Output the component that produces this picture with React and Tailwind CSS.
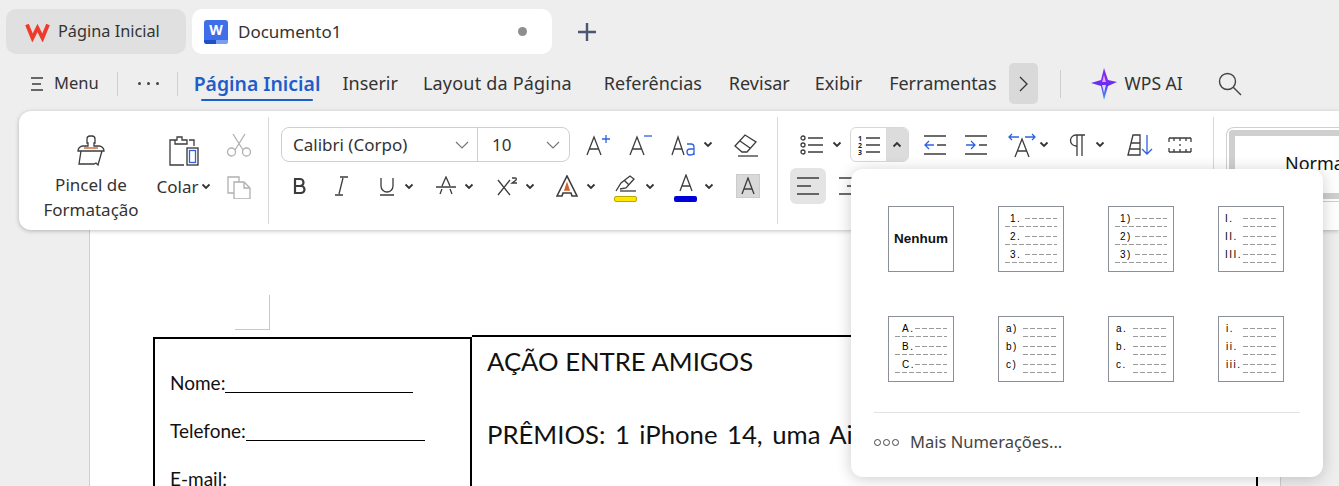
import React from 'react'

const ink = '#3c3c3c'

const Chevron = ({ className = '' }) => (
    <svg width="10" height="7" viewBox="0 0 10 7" className={`shrink-0 ${className}`} fill="none" stroke="#333" strokeWidth="1.8">
        <path d="M1.5 1.5 5 5l3.5-3.5" />
    </svg>
)

const Icon = ({ w = 24, h = 24, children, className = '' }) => (
    <svg width={w} height={h} viewBox={`0 0 ${w} ${h}`} fill="none" stroke={ink} strokeWidth="1.3" className={`shrink-0 ${className}`}>
        {children}
    </svg>
)

const DASH = 'h-px bg-[repeating-linear-gradient(90deg,#9a9a9a_0_5px,transparent_5px_7px)]'

// numbering thumbnails, offsets measured from the box edge
const thumbs = [
    { labels: ['1.', '2.', '3.'], labelX: 11, dashX: 26, underX: 6 },
    { labels: ['1)', '2)', '3)'], labelX: 11, dashX: 26, underX: 6 },
    { labels: ['I.', 'II.', 'III.'], labelX: 6, dashX: 24, underX: 24 },
    { labels: ['A.', 'B.', 'C.'], labelX: 13, dashX: 26, underX: 6 },
    { labels: ['a)', 'b)', 'c)'], labelX: 7, dashX: 24, underX: 24 },
    { labels: ['a.', 'b.', 'c.'], labelX: 7, dashX: 24, underX: 24 },
    { labels: ['i.', 'ii.', 'iii.'], labelX: 7, dashX: 24, underX: 24 },
]

const Thumb = ({ labels, labelX, dashX, underX }) => (
    <div className="w-[66px] h-[66px] border border-[#8b8f98] pt-[5px] pr-[6px] bg-white">
        {labels.map((label) => (
            <div key={label} className="h-[18px]">
                <div className="flex items-center h-[13px]" style={{ paddingLeft: labelX }}>
                    <span className="text-[10px] leading-[12px] tracking-[1.5px] whitespace-nowrap text-black font-['Liberation_Sans',sans-serif]" style={{ width: dashX - labelX }}>{label}</span>
                    <div className={`flex-1 ${DASH}`} />
                </div>
                <div className={`mt-[1px] ${DASH}`} style={{ marginLeft: underX }} />
            </div>
        ))}
    </div>
)

const tabs = [
    { label: 'Inserir', cls: 'ml-[22px]' },
    { label: 'Layout da Página', cls: 'ml-[25px] tracking-[0.2px]' },
    { label: 'Referências', cls: 'ml-[32px]' },
    { label: 'Revisar', cls: 'ml-[27px]' },
    { label: 'Exibir', cls: 'ml-[25px]' },
    { label: 'Ferramentas', cls: 'ml-[27px]' },
]

const App = () => {
    return (
        <div className="relative w-[1339px] h-[486px] overflow-hidden bg-[#eeeeee] font-['Noto_Sans',sans-serif] text-[#333]">

            {/* Title bar */}
            <div className="flex items-center h-[45px] mt-[9px] pl-[6px]">
                <div className="flex items-center w-[180px] h-[45px] rounded-[10px] bg-[#e0e0e0] pl-[19px]">
                    <svg width="25" height="20" viewBox="0 0 25 20" fill="none" stroke="#ee3b2b" strokeWidth="3.8" strokeLinejoin="miter">
                        <path d="M2 2.5 7.5 16l5-10 5 10L23 2.5" />
                    </svg>
                    <span className="ml-[8px] text-[16.3px]">Página Inicial</span>
                </div>
                <div className="flex items-center w-[360px] h-[45px] ml-[6px] rounded-[10px] bg-white pl-[12px]">
                    <div className="relative flex justify-center w-[24px] h-[24px] rounded-[3px] bg-[#3f6fe8] text-white text-[14px] leading-[20px] font-bold overflow-hidden">
                        W
                        <div className="absolute left-0 bottom-0 w-[12px] h-[4px] bg-[#1c4fc9]" />
                        <div className="absolute right-0 bottom-0 w-[12px] h-[4px] bg-[#7b9ff0]" />
                    </div>
                    <span className="ml-[10px] text-[17px]">Documento1</span>
                    <div className="ml-auto mr-[25px] w-[9px] h-[9px] rounded-full bg-[#8e8e8e]" />
                </div>
                <svg width="18" height="18" viewBox="0 0 18 18" className="ml-[26px]" stroke="#4a5672" strokeWidth="2.4">
                    <path d="M9 0v18M0 9h18" />
                </svg>
            </div>

            {/* Menu bar */}
            <div className="flex items-center h-[45px] mt-[7px] pl-[30px]">
                <Icon w={14} h={16}><path d="M1 2h12M2 8h9M1 14h12" /></Icon>
                <span className="ml-[10px] text-[16.5px]">Menu</span>
                <div className="w-px h-[24px] bg-[#cfcfcf] ml-[18px]" />
                <div className="flex gap-[6px] ml-[20px]">
                    <div className="w-[3px] h-[3px] rounded-full bg-[#444]" />
                    <div className="w-[3px] h-[3px] rounded-full bg-[#444]" />
                    <div className="w-[3px] h-[3px] rounded-full bg-[#444]" />
                </div>
                <div className="w-px h-[24px] bg-[#cfcfcf] ml-[18px]" />
                <div className="relative ml-[16px] text-[19.4px] font-semibold text-[#1d5fc9]">
                    Página Inicial
                    <div className="absolute left-[7px] right-[7px] bottom-[-3px] h-[2px] rounded bg-[#1d5fc9]" />
                </div>
                {tabs.map((t) => (
                    <span key={t.label} className={`${t.cls} text-[18px]`}>{t.label}</span>
                ))}
                <div className="flex items-center justify-center w-[29px] h-[41px] ml-[12px] rounded-[5px] bg-[#d9d9d9]">
                    <svg width="9" height="16" viewBox="0 0 9 16" fill="none" stroke="#333" strokeWidth="1.3"><path d="m1 1 7 7-7 7" /></svg>
                </div>
                <div className="w-px h-[28px] bg-[#cfcfcf] ml-[22px]" />
                <svg width="28" height="34" viewBox="0 0 28 34" fill="none" className="ml-[29px]">
                    <defs>
                        <linearGradient id="wpsStar" x1="0" y1="0" x2="0" y2="1">
                            <stop offset="0" stopColor="#8a2cf0" />
                            <stop offset="0.55" stopColor="#6a2cf0" />
                            <stop offset="1" stopColor="#3aa4f7" />
                        </linearGradient>
                    </defs>
                    <path d="M14 1 18 13l9 2-9 4-4 14-3-14-10-3 10-3Z" fill="url(#wpsStar)" />
                    <path d="M14 8l2 7h-4Z" fill="#f3a0e0" />
                    <path d="M12 18h4l-2 8Z" fill="#bfe6ff" />
                </svg>
                <span className="ml-[7px] text-[17.5px]">WPS AI</span>
                <svg width="24" height="24" viewBox="0 0 24 24" fill="none" stroke="#444" strokeWidth="1.4" className="ml-[35px]">
                    <circle cx="9.5" cy="9.5" r="8" /><path d="m15 15 8 8" />
                </svg>
            </div>

            {/* Ribbon */}
            <div className="relative z-10 flex h-[119px] mt-[5px] ml-[19px] pt-[6px] bg-white rounded-l-[12px] shadow-[0_1px_4px_rgba(0,0,0,0.25)]">

                {/* Clipboard group */}
                <div className="flex shrink-0 w-[250px] h-[107px] border-r border-[#d8d8d8]">
                    <div className="flex flex-col items-center w-[144px] pt-[18px]">
                        <Icon w={30} h={32}>
                            <path d="M12 11V8h-1V4a3 3 0 0 1 3-3h2a3 3 0 0 1 3 3v4h-1v3h5a5 5 0 0 1 5 5H2a5 5 0 0 1 5-5h5Z" />
                            <path d="M5 16 3 29h15l2-1 2 2 4-14" />
                            <path d="M8 13h14" stroke="#d2622c" strokeWidth="1.4" />
                        </Icon>
                        <div className="mt-[5px] text-[17px] leading-[25px] text-center">Pincel de<br />Formatação</div>
                    </div>
                    <div className="flex flex-col items-center w-[70px] -ml-[14px] pt-[18px]">
                        <Icon w={32} h={32}>
                            <path d="M7 5H2v25h14M26 11V5h-5M9 2h5v3h5v4H7V5h2Z" />
                            <rect x="19" y="13" width="11" height="17" stroke="#333" />
                            <rect x="21.5" y="15.5" width="6" height="12" stroke="#2f62e0" />
                        </Icon>
                        <div className="flex items-center mt-[7px] text-[17px] leading-[25px]">Colar<Chevron className="ml-[3px]" /></div>
                    </div>
                    <div className="flex flex-col gap-[18px] pt-[16px] pl-[7px]">
                        <Icon w={26} h={24}>
                            <g stroke="#b0b0b0"><path d="M7 1l10 16M19 1 9 17" /><circle cx="5.5" cy="19" r="4" /><circle cx="20.5" cy="19" r="4" /></g>
                        </Icon>
                        <Icon w={26} h={24}>
                            <g stroke="#b0b0b0"><path d="M8 18H2V2h11v5" /><path d="M8 7h10l6 6v11H8Z" /><path d="M18 7v6h6" /></g>
                        </Icon>
                    </div>
                </div>

                {/* Font group */}
                <div className="shrink-0 w-[509px] h-[107px] border-r border-[#d8d8d8] pl-[12px] pt-[10px]">
                    <div className="flex items-center h-[35px]">
                        <div className="flex items-center w-[289px] h-[35px] border border-[#cfcfcf] rounded-[8px]">
                            <div className="flex items-center w-[196px] h-full pl-[11px] pr-[8px] border-r border-[#cfcfcf] text-[17px]">
                                Calibri (Corpo)
                                <svg width="14" height="8" viewBox="0 0 14 8" fill="none" stroke="#777" strokeWidth="1.2" className="ml-auto"><path d="m1 1 6 6 6-6" /></svg>
                            </div>
                            <div className="flex items-center flex-1 pl-[14px] pr-[9px] text-[17px]">
                                10
                                <svg width="14" height="8" viewBox="0 0 14 8" fill="none" stroke="#777" strokeWidth="1.2" className="ml-auto"><path d="m1 1 6 6 6-6" /></svg>
                            </div>
                        </div>
                        <Icon w={24} h={24} className="ml-[16px]">
                            <path d="M1 22 8 4l7 18M3.5 16h9" /><path d="M16 6h8M20 2v8" stroke="#2f62e0" />
                        </Icon>
                        <Icon w={24} h={24} className="ml-[19px]">
                            <path d="M1 22 8 4l7 18M3.5 16h9" /><path d="M15 3h8" stroke="#2f62e0" />
                        </Icon>
                        <Icon w={26} h={24} className="ml-[18px]">
                            <path d="M1 22 7 4l6 18M3 16h8" /><g stroke="#2f62e0"><path d="M16 11h4a3 3 0 0 1 3 3v8M23 16h-4a3 3 0 1 0 0 6c2 0 4-1 4-3" /></g>
                        </Icon>
                        <Chevron className="ml-[6px]" />
                        <Icon w={26} h={24} className="ml-[20px]">
                            <path d="m2 13 10-11 11 7-9 10H9Z M7 8l10 7" /><path d="M5 23h20" />
                        </Icon>
                    </div>
                    <div className="flex items-center h-[24px] mt-[12px] pl-[11px]">
                        <svg width="16" height="18" viewBox="0 0 16 18" fill="none" stroke={ink} strokeWidth="2.2" className="shrink-0"><path d="M3 2v14h6a3.5 3.5 0 0 0 0-7H3h5a3.5 3.5 0 0 0 0-7H2" /></svg>
                        <Icon w={18} h={20} className="ml-[24px]"><path d="M3 19h8M8 1h8M11 2 7 18" /></Icon>
                        <Icon w={18} h={20} className="ml-[28px]"><path d="M3 2v8a6 6 0 0 0 12 0V2M2 19h14" /></Icon>
                        <Chevron className="ml-[8px]" />
                        <Icon w={22} h={20} className="ml-[21px]"><path d="M7 10 11 1l4 9M1 11h20M5 18l2-5M17 18l-2-5" /></Icon>
                        <Chevron className="ml-[7px]" />
                        <Icon w={22} h={20} className="ml-[22px]"><path d="M2 4l12 15M14 4 2 19" /><path d="M16 2h3q2 0 1 2l-4 3h5" /></Icon>
                        <Chevron className="ml-[7px]" />
                        <svg width="22" height="22" viewBox="0 0 22 22" fill="none" stroke={ink} strokeWidth="1.6" className="shrink-0 ml-[21px]">
                            <path d="M1 21 11 1l10 20h-5l-1-3H7l-1 3Z" /><path d="M9 15 11 9l2 6Z" fill="#d2622c" stroke="#d2622c" />
                        </svg>
                        <Chevron className="ml-[8px]" />
                        <div className="relative shrink-0 w-[24px] h-[24px] ml-[18px]">
                            <Icon w={24} h={18}><path d="M2 17 7 9l9-7 4 3-8 9-6 1M10 6l5 5" /><path d="M6 17h16" /></Icon>
                            <div className="absolute left-0 bottom-[-4px] w-[23px] h-[6px] rounded-[2px] bg-[#ffe600] border border-[#b7a900]" />
                        </div>
                        <Chevron className="ml-[7px]" />
                        <div className="relative shrink-0 w-[24px] h-[24px] ml-[19px]">
                            <Icon w={24} h={18}><path d="M6 17 12 1l6 16M8 12h8" /></Icon>
                            <div className="absolute left-0 bottom-[-4px] w-[23px] h-[6px] rounded-[2px] bg-[#0000d8]" />
                        </div>
                        <Chevron className="ml-[6px]" />
                        <div className="flex items-center justify-center w-[24px] h-[24px] ml-[22px] bg-[#d9d9d9] border border-[#cccccc]">
                            <Icon w={14} h={18}><path d="M1 17 7 1l6 16M3 12h8" /></Icon>
                        </div>
                    </div>
                </div>

                {/* Paragraph group */}
                <div className="shrink-0 w-[436px] h-[107px] border-r border-[#d8d8d8] pt-[10px] pl-[12px]">
                    <div className="flex items-center h-[35px]">
                        <Icon w={24} h={22} className="ml-[10px]">
                            <circle cx="3" cy="4" r="2" /><circle cx="3" cy="11" r="2" /><circle cx="3" cy="18" r="2" />
                            <path d="M8 4h15M8 11h15M8 18h15" />
                        </Icon>
                        <Chevron className="ml-[8px]" />
                        <div className="flex items-stretch w-[59px] h-[35px] ml-[8px] border border-[#d8d8d8] rounded-[6px] overflow-hidden">
                            <div className="flex items-center justify-center w-[35px]">
                                <Icon w={24} h={24}>
                                    <path d="M9 5h14M9 12h14M9 19h14" />
                                    <text x="1" y="7.5" fontSize="7" fontWeight="700" stroke="none" fill="#222">1</text>
                                    <text x="1" y="14.5" fontSize="7" fontWeight="700" stroke="none" fill="#222">2</text>
                                    <text x="1" y="21.5" fontSize="7" fontWeight="700" stroke="none" fill="#222">3</text>
                                </Icon>
                            </div>
                            <div className="flex items-center justify-center flex-1 bg-[#dcdcdc]">
                                <Chevron className="rotate-180" />
                            </div>
                        </div>
                        <Icon w={24} h={22} className="ml-[14px]">
                            <path d="M1 2h22M1 20h22M14 11h9" /><path d="M11 11H2m4-4-4 4 4 4" stroke="#2f62e0" />
                        </Icon>
                        <Icon w={24} h={22} className="ml-[17px]">
                            <path d="M1 2h22M1 20h22M15 11h8" /><path d="M2 11h9m-4-4 4 4-4 4" stroke="#2f62e0" />
                        </Icon>
                        <Icon w={28} h={26} className="ml-[20px]">
                            <path d="M7 25 14 7l7 18M9 19h10" /><path d="M1 5h10M4 2 1 5l3 3M17 5h10M24 2l3 3-3 3" stroke="#2f62e0" />
                        </Icon>
                        <Chevron className="ml-[3px]" />
                        <Icon w={18} h={24} className="ml-[20px]">
                            <path d="M8 2v21M13 2v21M16 2H7a5 5 0 0 0 0 11h1" />
                        </Icon>
                        <Chevron className="ml-[8px]" />
                        <Icon w={26} h={24} className="ml-[22px]">
                            <path d="M1 22 6 2h7v20ZM4 10h9M2 16h11" /><path d="M20 2v19m-5-5 5 5 5-5" stroke="#2f62e0" />
                        </Icon>
                        <Icon w={24} h={18} className="ml-[15px]">
                            <path d="M1 2h22M1 16h22M1 2v4M23 2v4M1 12v4M23 12v4M6 2v3M12 2v3M18 2v3M6 13v3M12 13v3M18 13v3M12 8v2" />
                        </Icon>
                    </div>
                    <div className="flex items-center h-[36px] mt-[6px]">
                        <div className="flex items-center justify-center w-[36px] h-[36px] rounded-[6px] bg-[#e4e4e4]">
                            <Icon w={24} h={20}><path d="M1 2h22M1 10h14M1 18h22" /></Icon>
                        </div>
                        <Icon w={24} h={20} className="ml-[12px]"><path d="M1 2h22M9 10h14M1 18h22" /></Icon>
                    </div>
                </div>

                {/* Styles gallery */}
                <div className="flex-1 min-w-0 overflow-hidden pt-[10px] pl-[12px]">
                    <div className="h-[75px] border border-[#d0d0d0] border-r-0 rounded-l-[8px] p-[2px] pr-0">
                        <div className="h-full border-[6px] border-r-0 border-[#cfcfcf] rounded-tl-[4px] pl-[50px] pt-[14px] text-[18px] whitespace-nowrap text-[#111]">
                            Normal
                        </div>
                    </div>
                </div>
            </div>

            {/* Document page */}
            <div className="w-[1192px] h-[300px] ml-[89px] pt-[65px] bg-white border-x border-[#cfcfcf]">
                <div className="w-[35px] h-[35px] ml-[145px] border-r border-b border-[#c8c8c8]" />
                <div className="flex items-start ml-[63px] mt-[5px] text-[#111] font-['Lato',sans-serif]">
                    <div className="w-[319px] h-[200px] mt-[2px] pl-[15px] pt-[20px] border-2 border-black text-[19px] leading-[48px]">
                        <div>Nome:<span className="inline-block align-[-3px] w-[188px] border-b border-black" /></div>
                        <div>Telefone:<span className="inline-block align-[-3px] w-[179px] border-b border-black" /></div>
                        <div>E-mail:</div>
                    </div>
                    <div className="w-[786px] h-[200px] pl-[15px] pt-[6px] border-2 border-l-0 border-black text-[25.7px] leading-[36.5px] whitespace-nowrap">
                        <div>AÇÃO ENTRE AMIGOS</div>
                        <div className="h-[36.5px]" />
                        <div className="[word-spacing:3px]">PRÊMIOS: 1 iPhone 14, uma AirPods</div>
                    </div>
                </div>
            </div>

            {/* Numbering dropdown */}
            <div className="absolute z-20 left-[851px] top-[169px] w-[472px] h-[308px] rounded-[12px] bg-white shadow-[0_2px_16px_rgba(0,0,0,0.2)] px-[23px]">
                <div className="grid grid-cols-[repeat(4,66px)] gap-x-[44px] gap-y-[44px] pl-[14px] pt-[37px]">
                    <div className="flex items-center justify-center w-[66px] h-[66px] border border-[#8b8f98] text-[13.5px] font-bold text-[#111] font-['Liberation_Sans',sans-serif]">Nenhum</div>
                    {thumbs.map((t) => (
                        <Thumb key={t.labels[0]} {...t} />
                    ))}
                </div>
                <div className="h-px mt-[30px] bg-[#e2e2e2]" />
                <div className="flex items-center h-[58px]">
                    <div className="flex gap-[2px]">
                        <div className="w-[7px] h-[7px] rounded-full border border-[#444]" />
                        <div className="w-[7px] h-[7px] rounded-full border border-[#444]" />
                        <div className="w-[7px] h-[7px] rounded-full border border-[#444]" />
                    </div>
                    <span className="ml-[11px] text-[16.5px] text-[#444]">Mais Numerações...</span>
                </div>
            </div>
        </div>
    )
}

export default App
